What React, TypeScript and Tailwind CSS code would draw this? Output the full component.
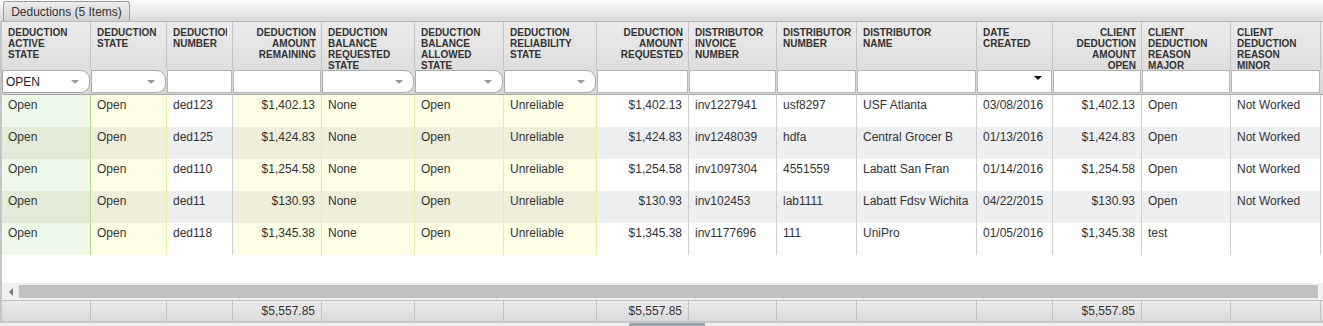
import React from 'react'

type Tone = 'green' | 'yellow' | 'plain'
type Filter = 'select' | 'input' | 'date'

type Column = {
  title: string
  tone: Tone
  filter: Filter
  right?: boolean
  filterValue?: string
}

const GRID =
  'grid grid-cols-[89px_76px_66px_89px_93px_89px_93px_92px_88px_80px_120px_76px_89px_89px_90px]'

const tones = {
  green: { odd: 'bg-[#eef9e9]', even: 'bg-[#e1ebd8]', border: 'border-[#b4df8c]' },
  yellow: { odd: 'bg-[#fdfde8]', even: 'bg-[#eeeedb]', border: 'border-[#ebeb98]' },
  plain: { odd: 'bg-white', even: 'bg-[#eeeff1]', border: 'border-[#cfcfcf]' },
}

const columns: Column[] = [
  { title: 'DEDUCTION ACTIVE STATE', tone: 'green', filter: 'select', filterValue: 'OPEN' },
  { title: 'DEDUCTION STATE', tone: 'yellow', filter: 'select' },
  { title: 'DEDUCTION NUMBER', tone: 'plain', filter: 'input' },
  { title: 'DEDUCTION AMOUNT REMAINING', tone: 'yellow', filter: 'input', right: true },
  { title: 'DEDUCTION BALANCE REQUESTED STATE', tone: 'yellow', filter: 'select' },
  { title: 'DEDUCTION BALANCE ALLOWED STATE', tone: 'yellow', filter: 'select' },
  { title: 'DEDUCTION RELIABILITY STATE', tone: 'yellow', filter: 'select' },
  { title: 'DEDUCTION AMOUNT REQUESTED', tone: 'plain', filter: 'input', right: true },
  { title: 'DISTRIBUTOR INVOICE NUMBER', tone: 'plain', filter: 'input' },
  { title: 'DISTRIBUTOR NUMBER', tone: 'plain', filter: 'input' },
  { title: 'DISTRIBUTOR NAME', tone: 'plain', filter: 'input' },
  { title: 'DATE CREATED', tone: 'plain', filter: 'date' },
  { title: 'CLIENT DEDUCTION AMOUNT OPEN', tone: 'plain', filter: 'input', right: true },
  { title: 'CLIENT DEDUCTION REASON MAJOR', tone: 'plain', filter: 'input' },
  { title: 'CLIENT DEDUCTION REASON MINOR', tone: 'plain', filter: 'input' },
]

const rows: string[][] = [
  ['Open', 'Open', 'ded123', '$1,402.13', 'None', 'Open', 'Unreliable', '$1,402.13', 'inv1227941', 'usf8297', 'USF Atlanta', '03/08/2016', '$1,402.13', 'Open', 'Not Worked'],
  ['Open', 'Open', 'ded125', '$1,424.83', 'None', 'Open', 'Unreliable', '$1,424.83', 'inv1248039', 'hdfa', 'Central Grocer B', '01/13/2016', '$1,424.83', 'Open', 'Not Worked'],
  ['Open', 'Open', 'ded110', '$1,254.58', 'None', 'Open', 'Unreliable', '$1,254.58', 'inv1097304', '4551559', 'Labatt San Fran', '01/14/2016', '$1,254.58', 'Open', 'Not Worked'],
  ['Open', 'Open', 'ded11', '$130.93', 'None', 'Open', 'Unreliable', '$130.93', 'inv102453', 'lab1111', 'Labatt Fdsv Wichita', '04/22/2015', '$130.93', 'Open', 'Not Worked'],
  ['Open', 'Open', 'ded118', '$1,345.38', 'None', 'Open', 'Unreliable', '$1,345.38', 'inv1177696', '111', 'UniPro', '01/05/2016', '$1,345.38', 'test', ''],
]

const totals: Record<number, string> = { 3: '$5,557.85', 7: '$5,557.85', 12: '$5,557.85' }

function FilterCell({ col }: { col: Column }) {
  if (col.filter === 'select') {
    return (
      <div className="h-[23px] bg-white border border-[#a8a8a8] rounded-r-[9px] flex items-center pl-[3px] pr-[10px] text-[12px] text-[#222]">
        <span className="flex-1">{col.filterValue ?? ''}</span>
        <span className="w-0 h-0 border-l-[4px] border-r-[4px] border-t-[4px] border-l-transparent border-r-transparent border-t-[#9a9a9a]" />
      </div>
    )
  }
  if (col.filter === 'date') {
    return (
      <div className="h-[23px] bg-white border border-[#b4b4b4] flex items-start justify-end pt-[5px] pr-[9px]">
        <span className="w-0 h-0 border-l-[4px] border-r-[4px] border-t-[4px] border-l-transparent border-r-transparent border-t-[#111]" />
      </div>
    )
  }
  return <div className="h-[23px] bg-white border border-[#b4b4b4]" />
}

export default function App() {
  return (
    <div className="w-[1323px] h-[326px] overflow-hidden bg-[#eeeeee] font-['Liberation_Sans',Arial,sans-serif]">
      {/* Tab bar */}
      <div className="h-[22px] bg-gradient-to-b from-[#fbfbfb] to-[#dadada] border-b border-[#b8b8b8] flex items-end pl-[3px]">
        <div className="h-[20px] w-[127px] rounded-t-[3px] border border-b-0 border-[#9c9c9c] bg-gradient-to-b from-[#ededed] to-[#d2d2d2] flex items-center justify-center text-[12px] text-[#333]">
          Deductions (5 Items)
        </div>
      </div>

      <div className="border-l-2 border-[#c6c6c6]">
        {/* Header + filters */}
        <div className="bg-gradient-to-b from-[#ebebec] to-[#d7d7d8] border-b border-[#a9a9a9]">
          <div className={GRID}>
            {columns.map((c, i) => (
              <div
                key={i}
                className={`h-[48px] border-r border-[#c3c3c3] pt-[5px] pl-[6px] pr-[5px] text-[10px] leading-[11px] font-bold text-[#333] ${c.right ? 'text-right' : 'text-left'}`}
              >
                <div className="overflow-hidden">
                  {c.title.split(' ').map((w, wi) => (
                    <div key={wi} className="whitespace-nowrap">{w}</div>
                  ))}
                </div>
              </div>
            ))}
          </div>
          <div className={`${GRID} h-[24px]`}>
            {columns.map((c, i) => (
              <div key={i} className="pr-[1px]">
                <FilterCell col={c} />
              </div>
            ))}
          </div>
        </div>

        {/* Rows */}
        <div className="bg-white">
          {rows.map((r, ri) => (
            <div key={ri} className={GRID}>
              {r.map((v, ci) => {
                const c = columns[ci]
                const t = tones[c.tone]
                return (
                  <div
                    key={ci}
                    className={`h-[32px] border-r ${t.border} ${ri % 2 ? t.even : t.odd} pt-[3px] px-[6px] text-[12px] leading-[14px] text-[#333] whitespace-nowrap overflow-hidden ${c.right ? 'text-right' : 'text-left'}`}
                  >
                    {v}
                  </div>
                )
              })}
            </div>
          ))}
          <div className="h-[28px]" />
        </div>

        {/* Horizontal scrollbar */}
        <div className="h-[17px] bg-[#f0f0f0] flex items-center">
          <div className="w-[17px] h-[13px] flex items-center justify-center">
            <span className="w-0 h-0 border-t-[4px] border-b-[4px] border-r-[4px] border-t-transparent border-b-transparent border-r-[#777]" />
          </div>
          <div className="w-[1299px] h-[13px] bg-[#c1c1c1]" />
        </div>

        {/* Footer totals */}
        <div className="bg-gradient-to-b from-[#ebebec] to-[#dadadc] border-t border-[#c2c2c2] border-b-2 border-b-[#c8c8c8]">
          <div className={GRID}>
            {columns.map((c, i) => (
              <div
                key={i}
                className="h-[20px] border-r border-[#c2c2c2] px-[6px] text-right text-[12px] leading-[20px] text-[#333]"
              >
                {totals[i] ?? ''}
              </div>
            ))}
          </div>
        </div>
      </div>

      {/* Bottom strip with resize grip */}
      <div className="h-[4px] bg-[#efefef]">
        <div className="ml-[629px] w-[76px] h-[4px] bg-[#98a4ae] rounded-t-[1px]" />
      </div>
    </div>
  )
}
